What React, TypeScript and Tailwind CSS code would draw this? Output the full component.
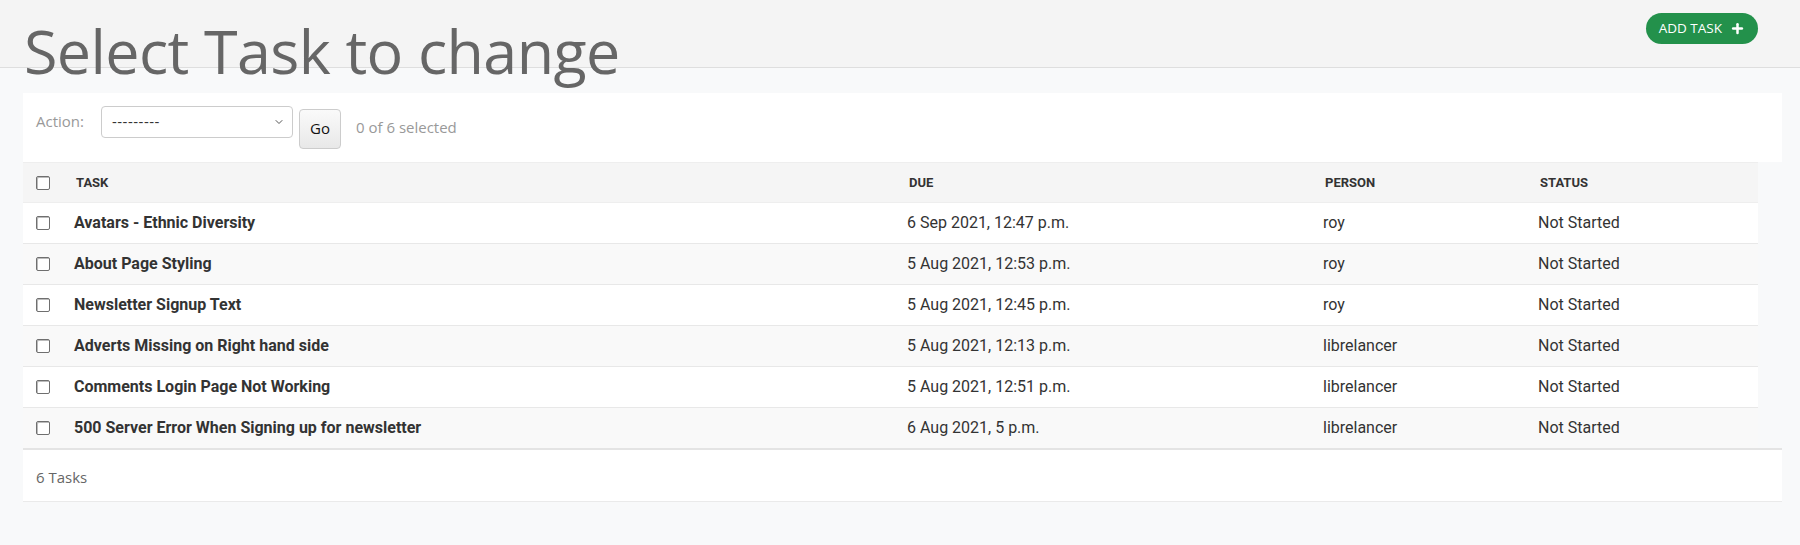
import { Plus, ChevronDown } from "lucide-react";

const tasks = [
  { title: "Avatars - Ethnic Diversity", due: "6 Sep 2021, 12:47 p.m.", person: "roy", status: "Not Started" },
  { title: "About Page Styling", due: "5 Aug 2021, 12:53 p.m.", person: "roy", status: "Not Started" },
  { title: "Newsletter Signup Text", due: "5 Aug 2021, 12:45 p.m.", person: "roy", status: "Not Started" },
  { title: "Adverts Missing on Right hand side", due: "5 Aug 2021, 12:13 p.m.", person: "librelancer", status: "Not Started" },
  { title: "Comments Login Page Not Working", due: "5 Aug 2021, 12:51 p.m.", person: "librelancer", status: "Not Started" },
  { title: "500 Server Error When Signing up for newsletter", due: "6 Aug 2021, 5 p.m.", person: "librelancer", status: "Not Started" },
];

function Checkbox() {
  return (
    <div className="w-[14px] h-[14px] border border-[#6f6f6f] rounded-[2px] bg-white shadow-[inset_1px_1px_0_#bbb]" />
  );
}

export default function App() {
  return (
    <div className="min-h-[545px] bg-[#f8f9fa] font-['Roboto',sans-serif] text-[#333]">
      <div className="h-[68px] bg-[#f4f4f4] border-b border-[#dedede] flex justify-between items-start">
        <h1 className="pl-[24px] pt-[16px] text-[61px] leading-[70px] font-normal text-[#666] font-['Open_Sans',sans-serif] whitespace-nowrap tracking-[-0.6px]">
          Select Task to change
        </h1>
        <button className="mt-[13px] mr-[42px] h-[31px] px-[13px] rounded-full bg-[#23914b] text-white text-[13.5px] font-['Open_Sans',sans-serif] flex items-center gap-[8px]">
          ADD TASK
          <Plus size={15} strokeWidth={4} />
        </button>
      </div>

      <div className="px-[23px] pr-[18px] pt-[25px]">
        <div className="h-[69px] bg-white flex items-center pl-[13px] font-['Open_Sans',sans-serif]">
          <span className="text-[15px] text-[#999] mt-[-12px]">Action:</span>
          <div className="ml-[17px] mt-[-12px] w-[192px] h-[32px] border border-[#ccc] rounded-[4px] flex items-center justify-between pl-[10px] pr-[7px]">
            <span className="text-[15px] text-[#333] tracking-[0.5px]">---------</span>
            <ChevronDown size={12} className="text-[#555]" strokeWidth={2} />
          </div>
          <button className="ml-[6px] mt-[2px] w-[42px] h-[40px] border border-[#ccc] rounded-[4px] bg-gradient-to-b from-[#fafafa] to-[#e8e8e8] text-[15px] text-[#111]">
            Go
          </button>
          <span className="ml-[15px] text-[15px] text-[#999]">0 of 6 selected</span>
        </div>

        <div className="w-[1735px]">
          <div className="h-[40px] bg-[#f5f5f5] border-t border-[#eee] flex items-center text-[13px] font-bold uppercase text-[#333]">
            <div className="w-[53px] pl-[13px]">
              <Checkbox />
            </div>
            <div className="w-[833px]">Task</div>
            <div className="w-[416px]">Due</div>
            <div className="w-[215px]">Person</div>
            <div>Status</div>
          </div>
          {tasks.map((t, i) => (
            <div
              key={t.title}
              className={`h-[41px] flex items-center text-[16px] border-t ${
                i % 2 === 1 ? "bg-[#f9f9f9]" : "bg-white"
              } ${i === 0 ? "border-[#eee]" : "border-[#e8e8e8]"}`}
            >
              <div className="w-[51px] pl-[13px]">
                <Checkbox />
              </div>
              <div className="w-[833px] font-bold">{t.title}</div>
              <div className="w-[416px]">{t.due}</div>
              <div className="w-[215px]">{t.person}</div>
              <div>{t.status}</div>
            </div>
          ))}
        </div>
        <div className="h-[54px] bg-white border-t-2 border-[#e4e4e4] border-b border-b-[#eaeaea] flex items-center pl-[13px] pt-[3px] text-[15px] text-[#666] font-['Open_Sans',sans-serif]">
          6 Tasks
        </div>
      </div>
    </div>
  );
}
